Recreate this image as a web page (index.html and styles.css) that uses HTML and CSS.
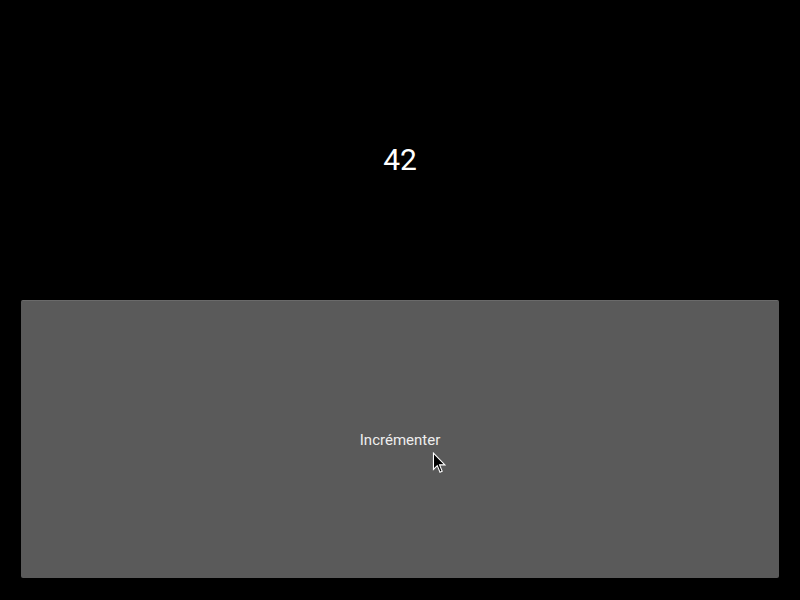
FILE: index.html
```html
<!DOCTYPE html>
<html>
<head>
<meta charset="utf-8">
<link rel="stylesheet" href="styles.css">
</head>
<body>
<div class="app">
  <div class="counter"><span class="value">42</span></div>
  <button class="btn">Incrémenter</button>
</div>
<svg class="cursor" width="16" height="24" viewBox="0 0 14 22"><path d="M1 1 L1 16 L4.5 12.5 L7 18.5 L9 17.6 L6.6 11.8 L11.5 11.8 Z" fill="#000" stroke="#fff" stroke-width="1"/></svg>
</body>
</html>
```
FILE: styles.css
```css
html, body {
  margin: 0;
  padding: 0;
  background: #000;
  width: 800px;
  height: 600px;
  overflow: hidden;
  font-family: Roboto, "Noto Sans", sans-serif;
}
.app {
  display: flex;
  flex-direction: column;
  height: 600px;
  box-sizing: border-box;
  padding: 0 21px 22px 21px;
}
.counter {
  height: 300px;
  display: flex;
  justify-content: center;
  align-items: flex-start;
  padding-top: 142px;
  box-sizing: border-box;
}
.value {
  color: #fff;
  font-size: 30px;
  line-height: 36px;
}
.btn {
  flex: 1;
  background: #5a5a5a;
  border: none;
  border-top: 1px solid #6a6a6a;
  border-radius: 2px;
  color: #eeeeee;
  font-family: Roboto, "Noto Sans", sans-serif;
  font-size: 15px;
  padding: 0;
  margin: 0;
}
.cursor {
  position: absolute;
  left: 432px;
  top: 452px;
}
```
